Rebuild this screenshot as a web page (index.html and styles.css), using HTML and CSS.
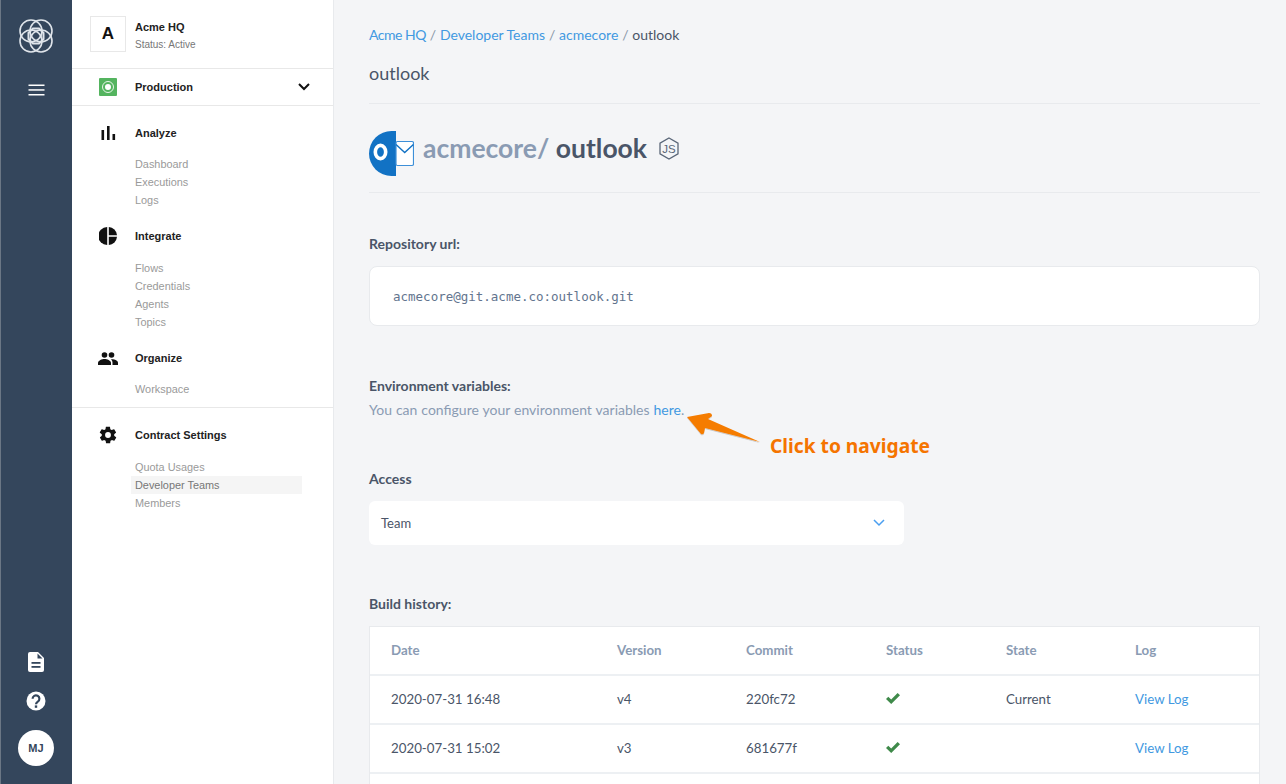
FILE: index.html
```html
<!DOCTYPE html>
<html lang="en">
<head>
  <meta charset="UTF-8">
  <title>outlook</title>
  <link rel="stylesheet" href="styles.css">
</head>
<body>
  <div class="app">
    <nav class="rail">
      <svg class="rail-logo" width="34" height="34" viewBox="0 0 34 34" fill="none" stroke="#dfe4ea" stroke-width="1.600">
        <circle cx="12" cy="12" r="11"/>
        <circle cx="22" cy="12" r="11"/>
        <circle cx="12" cy="22" r="11"/>
        <circle cx="22" cy="22" r="11"/>
        <path stroke-width="2" d="M14 9.500h6l4.500 4.500v6L20 24.500h-6L9.500 20v-6z"/>
      </svg>
      <svg class="rail-menu" width="17" height="12" viewBox="0 0 17 12" fill="#fff">
        <rect x="0.500" y="0.500" width="16" height="1.500"/>
        <rect x="0.500" y="5.200" width="16" height="1.500"/>
        <rect x="0.500" y="10" width="16" height="1.500"/>
      </svg>
      <div class="rail-bottom">
        <svg width="16" height="20" viewBox="0 0 16 20">
          <path fill="#fff" d="M2 0h8l6 6v12a2 2 0 0 1-2 2H2a2 2 0 0 1-2-2V2a2 2 0 0 1 2-2z"/>
          <path fill="#34465c" d="M9.500 1.500 14.500 6.500H9.500z"/>
          <rect x="3.500" y="10" width="9" height="1.800" fill="#34465c"/>
          <rect x="3.500" y="14" width="9" height="1.800" fill="#34465c"/>
        </svg>
        <svg width="20" height="20" viewBox="0 0 20 20">
          <circle cx="10" cy="10" r="9.500" fill="#fff"/>
          <path fill="none" stroke="#34465c" stroke-width="2.200" d="M6.600 7.800a3.400 3.400 0 1 1 5.200 2.800c-1.200.8-1.800 1.300-1.800 2.700"/>
          <rect x="8.800" y="14.400" width="2.400" height="2.400" fill="#34465c"/>
        </svg>
        <div class="avatar">MJ</div>
      </div>
    </nav>

    <aside class="side">
      <div class="org">
        <div class="org-mark">A</div>
        <div>
          <div class="org-name">Acme HQ</div>
          <div class="org-status">Status: Active</div>
        </div>
      </div>
      <div class="env">
        <span class="env-icon"><i></i></span>
        <span class="env-name">Production</span>
        <svg width="12" height="8" viewBox="0 0 12 8" fill="none" stroke="#111" stroke-width="2"><path d="M1 1l5 5 5-5"/></svg>
      </div>

      <div class="group group-analyze">
        <div class="group-head">
          <span class="group-icon">
            <svg width="15" height="14" viewBox="0 0 15 14" fill="#111"><rect x="0.500" y="4" width="2.600" height="10"/><rect x="6" y="0" width="2.600" height="14"/><rect x="11.500" y="8" width="2.600" height="6"/></svg>
          </span>
          Analyze
        </div>
        <a class="group-link">Dashboard</a>
        <a class="group-link">Executions</a>
        <a class="group-link">Logs</a>
      </div>

      <div class="group group-tall">
        <div class="group-head">
          <span class="group-icon">
            <svg width="18" height="18" viewBox="0 0 18 18" fill="#111"><path d="M8.200 0v18A9 9 0 0 1 8.200 0z"/><path d="M9.800 0A9 9 0 0 1 18 8.200H9.800z"/><path d="M9.800 9.800H18A9 9 0 0 1 9.800 18z"/></svg>
          </span>
          Integrate
        </div>
        <a class="group-link">Flows</a>
        <a class="group-link">Credentials</a>
        <a class="group-link">Agents</a>
        <a class="group-link">Topics</a>
      </div>

      <div class="group">
        <div class="group-head">
          <span class="group-icon">
            <svg width="20" height="13" viewBox="0 0 20 13" fill="#111"><circle cx="6.500" cy="3" r="2.800"/><circle cx="13.500" cy="3" r="2.800"/><path d="M0 13v-2c0-2.500 4-4 6.500-4S13 8.500 13 11v2z"/><path d="M14.500 13v-2.200c0-1.400-.6-2.500-1.600-3.500 3-.4 7.100 1 7.100 3.500V13z"/></svg>
          </span>
          Organize
        </div>
        <a class="group-link">Workspace</a>
      </div>

      <div class="group group-tall group-ruled">
        <div class="group-head">
          <span class="group-icon">
            <svg width="22" height="22" viewBox="0 0 24 24" fill="#111"><path d="M19.400 13c.1-.3.100-.7.100-1s0-.7-.1-1l2.100-1.600c.2-.2.300-.4.100-.6l-2-3.500c-.1-.2-.4-.3-.6-.2l-2.500 1c-.5-.4-1.100-.7-1.700-1l-.4-2.600c0-.3-.2-.5-.5-.5h-4c-.2 0-.5.200-.5.500l-.4 2.600c-.6.300-1.200.6-1.700 1l-2.500-1c-.2-.1-.5 0-.6.200l-2 3.500c-.1.200-.1.400.1.600L4.600 11c0 .3-.1.700-.1 1s0 .7.1 1l-2.100 1.600c-.2.200-.3.400-.1.600l2 3.500c.1.200.4.300.6.200l2.500-1c.5.400 1.100.7 1.700 1l.4 2.600c0 .3.300.5.500.5h4c.3 0 .5-.2.500-.5l.4-2.600c.6-.3 1.200-.6 1.700-1l2.500 1c.2.100.5 0 .6-.2l2-3.500c.1-.2.100-.4-.1-.6zM12 15.500a3.500 3.500 0 1 1 0-7 3.500 3.500 0 0 1 0 7z"/></svg>
          </span>
          Contract Settings
        </div>
        <a class="group-link">Quota Usages</a>
        <a class="group-link is-active">Developer Teams</a>
        <a class="group-link">Members</a>
      </div>
    </aside>

    <main class="main">
      <div class="crumbs">
        <a class="crumb-first">Acme HQ</a> <span>/</span> <a>Developer Teams</a> <span>/</span> <a>acmecore</a> <span>/</span> outlook
      </div>
      <h2 class="page-title">outlook</h2>

      <div class="repo-head">
        <svg class="repo-logo" width="45" height="45" viewBox="0 0 45 45">
          <path fill="#1272c4" d="M27 0v45h-4.500a22.500 22.500 0 0 1 0-45z"/>
          <rect x="27" y="10.500" width="17.500" height="24" rx="1.500" fill="#fff" stroke="#3d8fd8" stroke-width="1.200"/>
          <path fill="none" stroke="#1272c4" stroke-width="1.400" d="M27 13.500l8.700 8 8.700-8"/>
          <ellipse cx="11.500" cy="21" rx="5.200" ry="6.600" fill="none" stroke="#fff" stroke-width="3.600"/>
        </svg>
        <h1 class="repo-name"><span>acmecore/</span> outlook</h1>
        <svg width="20" height="23" viewBox="0 0 20 23">
          <path fill="none" stroke="#5a6678" stroke-width="1.300" d="M10 1l9 5.200v10.600L10 22l-9-5.200V6.200z"/>
          <text class="js-text" x="10" y="15.800" text-anchor="middle">JS</text>
        </svg>
      </div>

      <h3 class="label label-repo">Repository url:</h3>
      <div class="url-box">acmecore@git.acme.co:outlook.git</div>

      <h3 class="label label-env">Environment variables:</h3>
      <p class="hint">You can configure your environment variables <a>here</a>.</p>
      <div class="callout">
        <svg class="callout-arrow" width="78" height="36" viewBox="0 0 78 36">
          <defs>
            <filter id="arrow-shadow" x="-10%" y="-20%" width="120%" height="150%">
              <feDropShadow dx="0" dy="1" stdDeviation="0.700" flood-color="#000" flood-opacity="0.200"/>
            </filter>
          </defs>
          <path fill="#f57c00" filter="url(#arrow-shadow)" d="M2 7 L24 3 Q27 3 27 6 L23 9 L75 32 L20 18 L19 23 Q18 25 16 24 Z"/>
        </svg>
        <span class="callout-text">Click to navigate</span>
      </div>

      <h3 class="label label-access">Access</h3>
      <div class="select-box">
        Team
        <svg width="12" height="8" viewBox="0 0 12 8" fill="none" stroke="#4a9ff0" stroke-width="1.500"><path d="M1 1l5 5 5-5"/></svg>
      </div>

      <h3 class="label label-build">Build history:</h3>
      <div class="table-wrap">
        <table class="builds">
          <thead>
            <tr><th class="c-date">Date</th><th class="c-ver">Version</th><th class="c-commit">Commit</th><th class="c-status">Status</th><th class="c-state">State</th><th>Log</th></tr>
          </thead>
          <tbody>
            <tr>
              <td>2020-07-31 16:48</td><td>v4</td><td>220fc72</td>
              <td><svg class="tick" width="14" height="11" viewBox="0 0 14 11"><path fill="#3f8a4a" d="M0 6l2.300-2.300 2.900 2.900L11.600 0 14 2.300 5.200 11z"/></svg></td>
              <td>Current</td><td><a>View Log</a></td>
            </tr>
            <tr>
              <td>2020-07-31 15:02</td><td>v3</td><td>681677f</td>
              <td><svg class="tick" width="14" height="11" viewBox="0 0 14 11"><path fill="#3f8a4a" d="M0 6l2.300-2.300 2.900 2.900L11.600 0 14 2.300 5.200 11z"/></svg></td>
              <td></td><td><a>View Log</a></td>
            </tr>
            <tr class="row-cut"><td colspan="6"></td></tr>
          </tbody>
        </table>
      </div>
    </main>
  </div>
</body>
</html>
```

FILE: styles.css
```css
html, body {
  margin: 0;
  height: 100%;
  overflow: hidden;
}

body {
  font-family: "Lato", "Noto Sans", sans-serif;
  background: #f4f5f7;
  color: #4a5568;
}

h1, h2, h3, p {
  margin: 0;
}

.app {
  display: flex;
  height: 784px;
  border-left: 1px solid #6b7785;
}

/* dark rail */
.rail {
  width: 70px;
  padding-right: 1px;
  background: #34465c;
  display: flex;
  flex-direction: column;
  align-items: center;
  flex-shrink: 0;
}

.rail-logo {
  margin-top: 19px;
}

.rail-menu {
  margin-top: 31px;
}

.rail-bottom {
  margin-top: auto;
  margin-bottom: 18px;
  display: flex;
  flex-direction: column;
  align-items: center;
  gap: 19px;
}

.avatar {
  width: 36px;
  height: 36px;
  border-radius: 50%;
  background: #fff;
  color: #34465c;
  font: bold 11px/36px "Liberation Sans", sans-serif;
  text-align: center;
}

/* white sidebar */
.side {
  width: 261px;
  background: #fff;
  border-right: 1px solid #e8eaed;
  font-family: "Liberation Sans", sans-serif;
  flex-shrink: 0;
}

.org {
  display: flex;
  align-items: center;
  gap: 9px;
  height: 68px;
  padding-left: 18px;
  border-bottom: 1px solid #e8e8e8;
}

.org-mark {
  width: 34px;
  height: 34px;
  border: 1px solid #e8e8e8;
  color: #111;
  font: bold 17px/34px "Liberation Sans", sans-serif;
  text-align: center;
}

.org-name {
  padding-top: 2px;
  font-size: 11px;
  font-weight: bold;
  color: #222;
  line-height: 14px;
}

.org-status {
  font-size: 10px;
  color: #777;
  line-height: 12px;
  margin-top: 5px;
}

.env {
  display: flex;
  align-items: center;
  height: 36px;
  padding: 0 23px 0 27px;
  border-bottom: 1px solid #e8e8e8;
}

.env-icon {
  width: 18px;
  height: 18px;
  border-radius: 1px;
  background: #54b45f;
  display: flex;
  align-items: center;
  justify-content: center;
}

.env-icon i {
  width: 6px;
  height: 6px;
  border: 2px solid #54b45f;
  outline: 1px solid #e6f5e8;
  border-radius: 50%;
  background: #fff;
}

.env-name {
  flex: 1;
  margin-left: 18px;
  font-size: 11px;
  font-weight: bold;
  color: #222;
}

.group {
  padding-bottom: 17px;
}

.group-analyze {
  padding-top: 17px;
}

.group-ruled {
  margin-top: -8px;
  padding-top: 17px;
  border-top: 1px solid #e8e8e8;
}

.group-head {
  display: flex;
  align-items: center;
  height: 20px;
  margin-bottom: 12px;
  padding-left: 26px;
  font-size: 11px;
  font-weight: bold;
  color: #222;
}

.group-tall .group-head {
  margin-bottom: 13px;
}

.group-icon {
  width: 20px;
  margin-right: 17px;
  display: flex;
  justify-content: center;
}

.group-link {
  display: block;
  width: 167px;
  height: 18px;
  margin-left: 59px;
  padding-left: 4px;
  font-size: 10.900px;
  line-height: 18px;
  color: #9a9a9a;
}

.group-link.is-active {
  background: #f5f5f5;
  color: #777;
}

/* main column */
.main {
  flex: 1;
  min-width: 0;
  padding: 26px 26px 0 35px;
}

.main a {
  color: #4299e1;
}

.crumbs {
  font-size: 14px;
  line-height: 18px;
  color: #4a5568;
}

.crumbs span {
  color: #8a97a8;
  margin: 0 0.250px;
}

.crumbs .crumb-first {
  letter-spacing: -0.500px;
}

.page-title {
  margin-top: 18px;
  padding-bottom: 19px;
  font-size: 18px;
  font-weight: 400;
  line-height: 22px;
  border-bottom: 1px solid #e8eaed;
}

.repo-head {
  display: flex;
  align-items: center;
  height: 88px;
  border-bottom: 1px solid #e8eaed;
}

.repo-logo {
  margin-top: 11px;
}

.repo-name {
  margin: 0 12px 0 9px;
  font-size: 26.500px;
  font-weight: 700;
  line-height: 34px;
  color: #4a5568;
}

.repo-name span {
  color: #8a9bb3;
}

.js-text {
  font: 11.500px "Liberation Sans", sans-serif;
  fill: #5a6678;
}

.label {
  font-size: 14px;
  font-weight: 700;
  line-height: 18px;
  color: #4a5568;
}

.label-repo {
  margin-top: 42px;
}

.url-box {
  margin-top: 13px;
  height: 60px;
  padding-left: 23px;
  background: #fff;
  border: 1px solid #e8eaed;
  border-radius: 8px;
  box-sizing: border-box;
  font: 12.500px/59px "DejaVu Sans Mono", monospace;
  color: #62748e;
}

.label-env {
  margin-top: 51px;
}

.hint {
  margin-top: 6px;
  font-size: 14px;
  line-height: 18px;
  color: #8a9bb3;
  word-spacing: 0.400px;
}

.callout {
  position: relative;
  height: 0;
}

.callout-arrow {
  position: absolute;
  left: 316px;
  top: -9px;
}

.callout-text {
  position: absolute;
  left: 401px;
  top: 15px;
  font-family: "Noto Sans", sans-serif;
  font-size: 19.200px;
  font-weight: 700;
  line-height: 24px;
  color: #f57400;
  white-space: nowrap;
}

.label-access {
  margin-top: 51px;
}

.select-box {
  display: flex;
  align-items: center;
  justify-content: space-between;
  width: 535px;
  height: 44px;
  margin-top: 13px;
  padding: 0 19px 1px 12px;
  box-sizing: border-box;
  background: #fff;
  border-radius: 6px;
  font-size: 13px;
  color: #4a5568;
}

.label-build {
  margin-top: 50px;
}

.table-wrap {
  margin-top: 13px;
  background: #fff;
  border: 1px solid #e8eaed;
}

.builds {
  width: 100%;
  border-collapse: collapse;
  table-layout: fixed;
  font-size: 13.300px;
  color: #4a5568;
}

.builds th {
  box-sizing: border-box;
  height: 48px;
  padding: 0 0 2px 21px;
  text-align: left;
  font-weight: 700;
  color: #8a9bb3;
  border-bottom: 2px solid #edf0f3;
}

.builds td {
  box-sizing: border-box;
  height: 49px;
  padding: 0 0 2px 21px;
  border-bottom: 2px solid #edf0f3;
}

.c-date { width: 226px; }
.c-ver { width: 129px; }
.c-commit { width: 140px; }
.c-status { width: 120px; }
.c-state { width: 129px; }

.tick {
  display: block;
}

.builds .row-cut td {
  height: 20px;
  border-bottom: 0;
}
```
